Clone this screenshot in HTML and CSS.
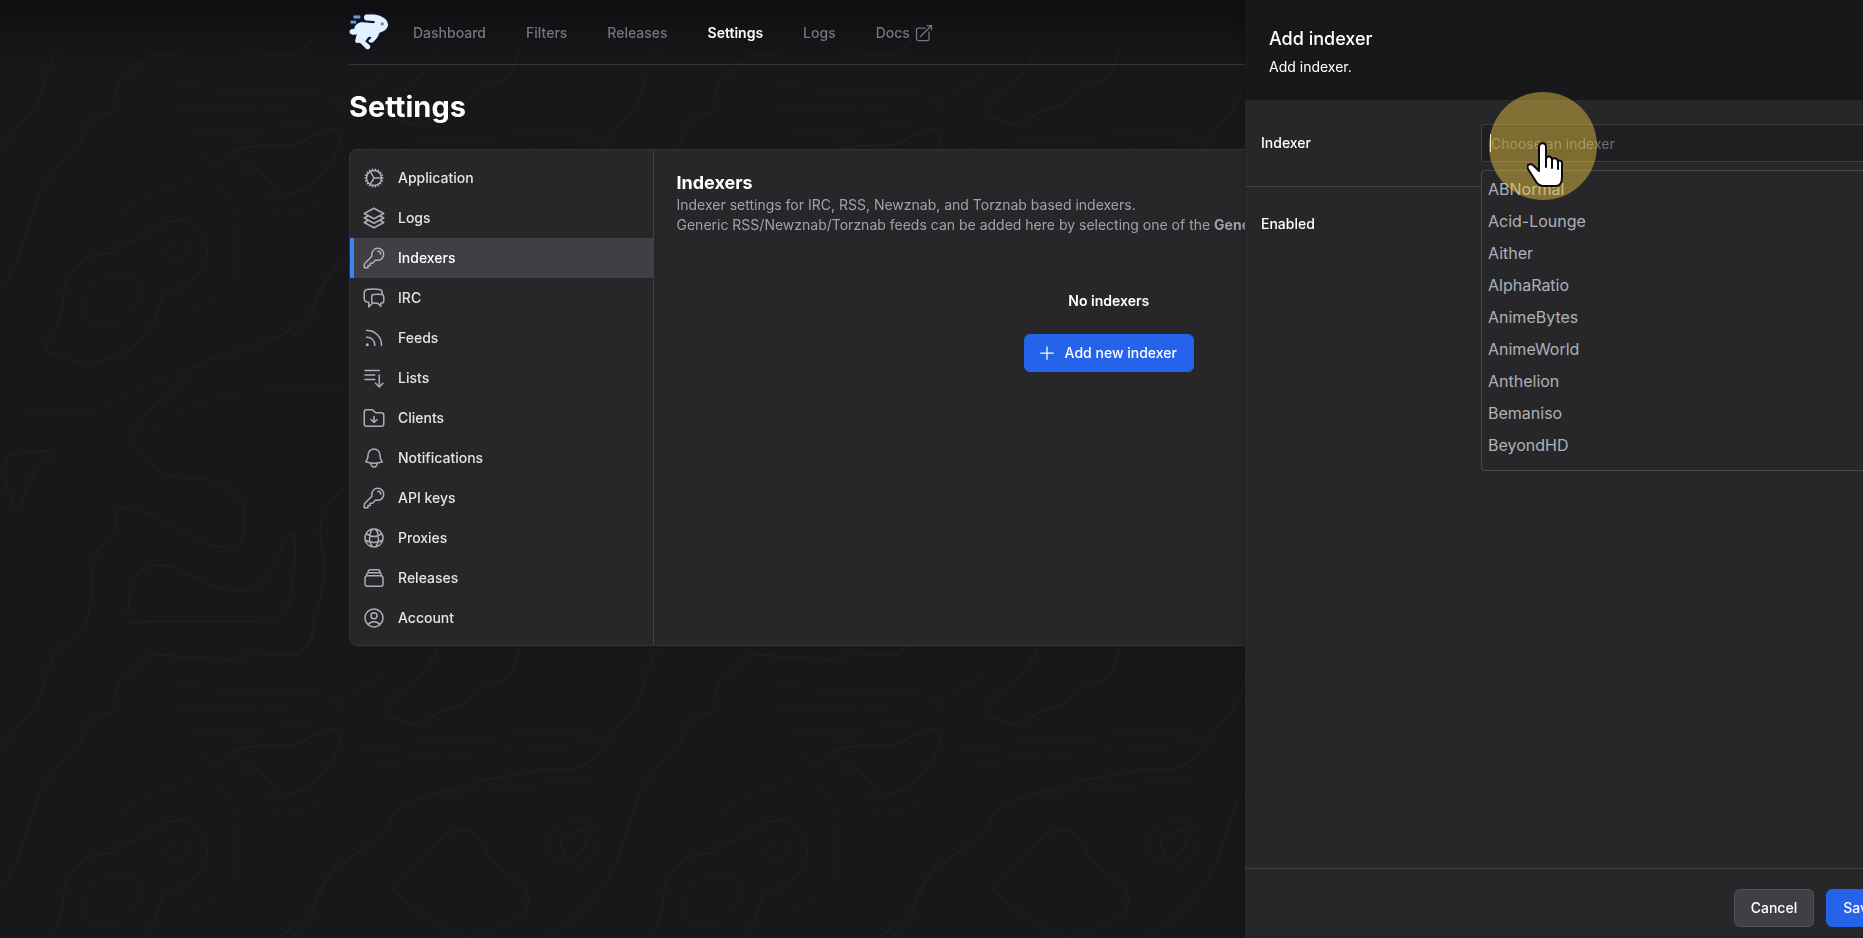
FILE: index.html
```html
<!DOCTYPE html>
<html lang="en">
<head>
	<meta charset="UTF-8">
	<meta name="viewport" content="width=device-width, initial-scale=1.0">
	<title>Settings - Indexers</title>
	<link rel="stylesheet" href="styles.css">
</head>
<body>

	<!-- contour line backdrop -->
	<svg class="backdrop" aria-hidden="true">
		<defs>
			<pattern id="contours" width="600" height="600" viewBox="0 0 1800 1800" patternUnits="userSpaceOnUse">
				<g id="lines" fill="none" stroke="#1e1e21" stroke-width="4">
					<path d="M0 455C30 420 30 400 95 335C140 290 120 190 190 140L240 93"/>
					<path d="M870 1010C920 990 940 960 950 900C970 830 1060 760 1140 715C1180 680 1140 660 1240 600C1300 570 1380 575 1410 560C1440 530 1500 540 1640 505C1720 520 1770 490 1800 455"/>
					<path d="M0 870C40 820 60 760 95 650C120 560 160 500 230 450C250 430 230 380 285 355C330 335 352 340 352 310C352 260 340 250 400 215C440 180 430 160 480 165C560 172 640 170 700 184C730 178 730 160 760 158C800 160 840 180 900 155C930 140 940 120 945 70"/>
					<path d="M1640 1010C1700 980 1770 920 1800 870"/>
					<path d="M685 462C740 430 820 440 890 434C950 400 1000 370 1020 400C1030 450 990 490 950 540C910 585 850 590 830 575C800 530 790 510 685 462Z"/>
					<path d="M145 1055C110 1040 190 990 190 900C190 830 240 755 335 760C360 740 340 730 400 725C440 710 470 660 550 660C600 680 630 740 620 770C610 830 550 860 490 890C460 960 440 1065 270 1090C200 1090 210 1065 145 1055Z"/>
					<path d="M1050 771C950 830 980 880 920 951C850 1020 760 1040 640 1076C540 1110 560 1150 500 1193C450 1220 400 1270 400 1318C410 1350 450 1400 500 1426C550 1440 600 1430 660 1446C700 1470 740 1520 735 1543C735 1590 730 1650 680 1641C620 1640 600 1620 560 1597C480 1560 420 1520 350 1525C345 1550 345 1575 345 1597C320 1620 280 1650 280 1704C275 1800 270 1860 240 1893"/>
					<path d="M385 1869C380 1750 400 1700 480 1695C560 1700 620 1775 740 1775C800 1770 830 1650 870 1600C900 1600 880 1720 870 1800C850 1860 830 1865 800 1862C660 1870 500 1855 385 1869Z"/>
					<path d="M1180 870C1200 820 1300 740 1330 710C1370 680 1420 680 1440 720C1470 770 1460 780 1540 830C1600 870 1600 930 1540 960C1440 1000 1430 1010 1400 1012C1360 1012 1250 940 1180 870Z"/>
					<path d="M1310 145C1290 200 1270 220 1240 245C1190 290 1150 300 1160 335C1180 355 1230 380 1260 375C1290 360 1300 340 1340 330C1420 310 1430 270 1460 255C1500 240 1520 250 1540 210C1560 150 1560 140 1570 100"/>
					<path d="M1680 720C1700 700 1760 680 1760 700C1760 740 1740 770 1710 780C1690 770 1680 730 1680 720Z"/>
					<path d="M20 1370C40 1350 120 1360 160 1350C180 1370 110 1390 100 1420C70 1500 60 1530 50 1525C20 1490 10 1430 20 1370Z"/>
					<path d="M1050 1455C990 1490 960 1530 960 1600C980 1700 970 1790 940 1870C940 1900 930 1930 900 1955"/>
				</g>
				<g id="faint" fill="none" stroke="#1b1b1e" stroke-width="3">
					<path d="M250 940C250 860 280 830 350 830C420 830 440 850 420 890C390 960 350 980 290 980C260 980 250 960 250 940Z"/>
					<path d="M490 745C495 725 540 710 570 730C580 760 560 780 530 785C500 775 490 760 490 745Z"/>
					<path d="M330 660C420 600 500 540 620 545C700 570 720 650 718 750C720 860 660 900 560 930"/>
					<path d="M500 255C560 240 600 260 640 275C750 280 900 260 960 270"/>
					<path d="M520 335C620 330 750 340 900 310C1000 330 1090 260 1120 230"/>
					<path d="M560 390C620 380 700 395 880 380C960 370 1050 320 1170 200"/>
					<path d="M560 410C600 400 680 410 770 415M570 430C590 490 640 480 740 510C800 560 820 620 840 650C900 650 940 600 1000 590"/>
					<path d="M1080 450C1250 420 1400 430 1560 400C1650 380 1750 400 1800 380"/>
					<path d="M1120 500C1300 450 1400 470 1560 450C1650 430 1750 440 1800 415"/>
					<path d="M1180 620C1300 580 1450 570 1560 560C1650 540 1750 560 1800 520"/>
					<path d="M1650 700C1700 660 1790 640 1800 690C1800 750 1760 810 1700 820C1660 800 1640 750 1650 700Z"/>
					<path d="M60 1250C150 1230 240 1260 330 1210C420 1160 500 1130 600 1090"/>
					<path d="M450 1300C560 1200 700 1170 850 1170C950 1160 1000 1190 1050 1150"/>
				</g>
				<use href="#lines" y="-1800"/>
			</pattern>
		</defs>
		<rect width="100%" height="100%" fill="url(#contours)"/>
	</svg>

	<div class="page">
		<header class="topbar">
			<div class="container">
				<nav class="nav">
					<a class="logo" href="#" aria-label="Home">
						<svg viewBox="26 39 124 116" width="40" height="40">
							<g stroke="#0b2447" stroke-width="5" stroke-linejoin="round" paint-order="stroke">
								<rect x="40" y="46" width="21" height="9" rx="2" fill="#7396c4"/>
								<rect x="31" y="62" width="17" height="9" rx="2" fill="#7396c4"/>
								<path fill="#e3f1ff" d="M80 43H104C128 46 146 58 147 74C146 88 135 96 120 99C117 111 110 118 102 127C97 132 90 130 86 125L96 114C93 110 87 111 83 116L76 126L91 139C95 146 87 153 80 150L62 132C54 130 46 133 45 125L50 104C43 106 32 107 28 99C26 90 34 86 42 88C45 74 54 67 68 67L102 70C107 69 108 64 104 63L80 61C70 60 70 44 80 43Z"/>
							</g>
							<circle cx="129" cy="72" r="5" fill="#5d83b5"/>
						</svg>
					</a>
					<div class="nav-links">
						<a href="#">Dashboard</a>
						<a href="#">Filters</a>
						<a href="#">Releases</a>
						<a href="#" class="current" aria-current="page">Settings</a>
						<a href="#">Logs</a>
						<a href="#">Docs
							<svg class="icon-sm" viewBox="0 0 24 24"><path d="M13.5 6H5.25A2.25 2.25 0 0 0 3 8.25v10.5A2.25 2.25 0 0 0 5.25 21h10.5A2.25 2.25 0 0 0 18 18.75V10.5m-10.5 6L21 3m0 0h-5.25M21 3v5.25"/></svg>
						</a>
					</div>
				</nav>
			</div>
		</header>

		<main class="container">
			<h1>Settings</h1>

			<div class="card">
				<aside class="sidebar">
					<a href="#">
						<svg class="icon" viewBox="0 0 24 24"><path d="M4.5 12a7.5 7.5 0 0 0 15 0m-15 0a7.5 7.5 0 1 1 15 0m-15 0H3m16.5 0H21m-1.5 0H12m-8.457 3.077 1.41-.513m14.095-5.13 1.41-.513M5.106 17.785l1.15-.964m11.49-9.642 1.149-.964M7.501 19.795l.75-1.3m7.5-12.99.75-1.3m-6.063 16.658.26-1.477m2.605-14.772.26-1.477m0 17.726-.26-1.477M10.698 4.614l-.26-1.477M16.5 19.794l-.75-1.299M7.5 4.205 12 12m6.894 5.785-1.149-.964M6.256 7.178l-1.15-.964m15.352 8.864-1.41-.513M4.954 9.435l-1.41-.514M12.002 12l-3.75 6.495"/></svg>
						Application
					</a>
					<a href="#">
						<svg class="icon" viewBox="0 0 24 24"><path d="M6.429 9.75 2.25 12l4.179 2.25m0-4.5 5.571 3 5.571-3m-11.142 0L2.25 7.5 12 2.25l9.75 5.25-4.179 2.25m0 0L21.75 12l-4.179 2.25m0 0 4.179 2.25L12 21.75 2.25 16.5l4.179-2.25m11.142 0-5.571 3-5.571-3"/></svg>
						Logs
					</a>
					<a href="#" class="active" aria-current="page">
						<svg class="icon" viewBox="0 0 24 24"><path d="M15.75 5.25a3 3 0 0 1 3 3m3 0a6 6 0 0 1-7.029 5.912c-.563-.097-1.159.026-1.563.43L10.5 17.25H8.25v2.25H6v2.25H2.25v-2.818c0-.597.237-1.17.659-1.591l6.499-6.499c.404-.404.527-1 .43-1.563A6 6 0 1 1 21.75 8.25Z"/></svg>
						Indexers
					</a>
					<a href="#">
						<svg class="icon" viewBox="0 0 24 24"><path d="M20.25 8.511c.884.284 1.5 1.128 1.5 2.097v4.286c0 1.136-.847 2.1-1.98 2.193-.34.027-.68.052-1.02.072v3.091l-3-3c-1.354 0-2.694-.055-4.02-.163a2.115 2.115 0 0 1-.825-.242m9.345-8.334a2.126 2.126 0 0 0-.476-.095 48.64 48.64 0 0 0-8.048 0c-1.131.094-1.976 1.057-1.976 2.192v4.286c0 .837.46 1.58 1.155 1.951m9.345-8.334V6.637c0-1.621-1.152-3.026-2.76-3.235A48.455 48.455 0 0 0 11.25 3c-2.115 0-4.198.137-6.24.402-1.608.209-2.76 1.614-2.76 3.235v6.226c0 1.621 1.152 3.026 2.76 3.235.577.075 1.157.14 1.74.194V21l4.155-4.155"/></svg>
						IRC
					</a>
					<a href="#">
						<svg class="icon" viewBox="0 0 24 24"><path d="M12.75 19.5v-.75a7.5 7.5 0 0 0-7.5-7.5H4.5m0-6.75h.75c7.87 0 14.25 6.38 14.25 14.25v.75M6 18.75a.75.75 0 1 1-1.5 0 .75.75 0 0 1 1.5 0Z"/></svg>
						Feeds
					</a>
					<a href="#">
						<svg class="icon" viewBox="0 0 24 24"><path d="M3 4.5h14.25M3 9h9.75M3 13.5h9.75m4.5-4.5v12m0 0-3.75-3.75M17.25 21 21 17.25"/></svg>
						Lists
					</a>
					<a href="#">
						<svg class="icon" viewBox="0 0 24 24"><path d="m9 13.5 3 3m0 0 3-3m-3 3v-6m1.06-4.19-2.12-2.12a1.5 1.5 0 0 0-1.061-.44H4.5A2.25 2.25 0 0 0 2.25 6v12a2.25 2.25 0 0 0 2.25 2.25h15A2.25 2.25 0 0 0 21.75 18V9a2.25 2.25 0 0 0-2.25-2.25h-5.379a1.5 1.5 0 0 1-1.06-.44Z"/></svg>
						Clients
					</a>
					<a href="#">
						<svg class="icon" viewBox="0 0 24 24"><path d="M14.857 17.082a23.848 23.848 0 0 0 5.454-1.31A8.967 8.967 0 0 1 18 9.75V9A6 6 0 0 0 6 9v.75a8.967 8.967 0 0 1-2.312 6.022c1.733.64 3.56 1.085 5.455 1.31m5.714 0a24.255 24.255 0 0 1-5.714 0m5.714 0a3 3 0 1 1-5.714 0"/></svg>
						Notifications
					</a>
					<a href="#">
						<svg class="icon" viewBox="0 0 24 24"><path d="M15.75 5.25a3 3 0 0 1 3 3m3 0a6 6 0 0 1-7.029 5.912c-.563-.097-1.159.026-1.563.43L10.5 17.25H8.25v2.25H6v2.25H2.25v-2.818c0-.597.237-1.17.659-1.591l6.499-6.499c.404-.404.527-1 .43-1.563A6 6 0 1 1 21.75 8.25Z"/></svg>
						API keys
					</a>
					<a href="#">
						<svg class="icon" viewBox="0 0 24 24"><path d="M12 21a9.004 9.004 0 0 0 8.716-6.747M12 21a9.004 9.004 0 0 1-8.716-6.747M12 21c2.485 0 4.5-4.03 4.5-9S14.485 3 12 3m0 18c-2.485 0-4.5-4.03-4.5-9S9.515 3 12 3m0 0a8.997 8.997 0 0 1 7.843 4.582M12 3a8.997 8.997 0 0 0-7.843 4.582m15.686 0A11.953 11.953 0 0 1 12 10.5c-2.998 0-5.74-1.1-7.843-2.918m15.686 0A8.959 8.959 0 0 1 21 12c0 .778-.099 1.533-.284 2.253m0 0A17.919 17.919 0 0 1 12 16.5c-3.162 0-6.133-.815-8.716-2.247m0 0A9.015 9.015 0 0 1 3 12c0-1.605.42-3.113 1.157-4.418"/></svg>
						Proxies
					</a>
					<a href="#">
						<svg class="icon" viewBox="0 0 24 24"><path d="M6 6.878V6a2.25 2.25 0 0 1 2.25-2.25h7.5A2.25 2.25 0 0 1 18 6v.878m-12 0c.235-.083.487-.128.75-.128h10.5c.263 0 .515.045.75.128m-12 0A2.25 2.25 0 0 0 4.5 9v.878m13.5-3A2.25 2.25 0 0 1 19.5 9v.878m0 0a2.246 2.246 0 0 0-.75-.128H5.25c-.263 0-.515.045-.75.128m15 0A2.25 2.25 0 0 1 21 12v6a2.25 2.25 0 0 1-2.25 2.25H5.25A2.25 2.25 0 0 1 3 18v-6c0-.98.626-1.813 1.5-2.122"/></svg>
						Releases
					</a>
					<a href="#">
						<svg class="icon" viewBox="0 0 24 24"><path d="M17.982 18.725A7.488 7.488 0 0 0 12 15.75a7.488 7.488 0 0 0-5.982 2.975m11.963 0a9 9 0 1 0-11.963 0m11.963 0A8.966 8.966 0 0 1 12 21a8.966 8.966 0 0 1-5.982-2.275M15 9.75a3 3 0 1 1-6 0 3 3 0 0 1 6 0Z"/></svg>
						Account
					</a>
				</aside>

				<section class="content">
					<h2>Indexers</h2>
					<p>Indexer settings for IRC, RSS, Newznab, and Torznab based indexers.<br>Generic RSS/Newznab/Torznab feeds can be added here by selecting one of the <b>Generic</b> indexers.</p>

					<div class="empty">
						<h3>No indexers</h3>
						<button type="button" class="btn btn-primary btn-icon">
							<svg class="icon-plus" viewBox="0 0 24 24"><path d="M12 4.5v15m7.5-7.5h-15"/></svg>
							Add new indexer
						</button>
					</div>
				</section>
			</div>
		</main>
	</div>

	<form class="drawer">
		<div class="drawer-head">
			<h2>Add indexer</h2>
			<p>Add indexer.</p>
		</div>

		<div class="drawer-body">
			<div class="field">
				<label for="indexer">Indexer</label>
				<div class="combo">
					<input id="indexer" type="text" placeholder="Choose an indexer" autocomplete="off">
					<span class="caret"></span>
					<ul class="menu">
						<li>ABNormal</li>
						<li>Acid-Lounge</li>
						<li>Aither</li>
						<li>AlphaRatio</li>
						<li>AnimeBytes</li>
						<li>AnimeWorld</li>
						<li>Anthelion</li>
						<li>Bemaniso</li>
						<li>BeyondHD</li>
					</ul>
					<div class="pointer">
						<svg viewBox="0 0 36 46" width="36" height="46">
							<path fill="#fff" stroke="#0a0a0a" stroke-width="2" stroke-linejoin="round" d="M12 29V5C12 0 19 0 19 5V17C20 13 25 14 25 18C26 15 31 16 31 20C32 17 36 19 35 23V35C35 40 33 44 29 44H16C12 44 10 42 8 38L1 27C-1 22 4 21 7 24Z"/>
							<path fill="none" stroke="#0a0a0a" stroke-width="2" stroke-linecap="round" d="M19 16V25M25 18V26M31 20V27"/>
						</svg>
					</div>
				</div>
			</div>
			<div class="field">
				<span class="field-name">Enabled</span>
			</div>
		</div>

		<div class="drawer-foot">
			<button type="button" class="btn">Cancel</button>
			<button type="submit" class="btn btn-primary">Save</button>
		</div>
	</form>

</body>
</html>
```

FILE: styles.css
```css
:root{
	font-family: Inter, "Liberation Sans", sans-serif;
	font-size: 14px;
	line-height: 20px;
	color: #fff;
	background-color: #18181b;
}

*{
	box-sizing: border-box;
}

body{
	margin: 0;
	height: 100vh;
	overflow: hidden;
}

h1, h2, h3, p, ul{
	margin: 0;
	padding: 0;
}

a{
	color: inherit;
	text-decoration: none;
}

.backdrop{
	position: fixed;
	inset: 0;
	width: 100%;
	height: 100%;
	z-index: -1;
}

/* page runs a little past the right edge, like the drawer */
.page{
	margin-right: -51px;
}

.container{
	max-width: 1216px;
	margin: 0 auto;
}

.topbar{
	background: linear-gradient(#0f0f12, #18181b00);
}

.nav{
	display: flex;
	align-items: center;
	height: 65px;
	border-bottom: 1px solid #36363a;
}

.logo svg{
	display: block;
}

.nav-links{
	display: flex;
	gap: 16px;
	margin-left: 12px;
	padding-top: 2px;
	font-weight: 500;
	color: #75757d;
}

.nav-links a{
	display: flex;
	align-items: center;
	gap: 4px;
	padding: 8px 12px;
}

.nav-links .current{
	color: #fff;
	font-weight: 600;
}

svg.icon, svg.icon-sm, svg.icon-plus{
	flex: none;
	fill: none;
	stroke: currentColor;
	stroke-width: 1.5;
	stroke-linecap: round;
	stroke-linejoin: round;
}

svg.icon{
	width: 24px;
	height: 24px;
	color: #adadb4;
}

svg.icon-sm{
	width: 20px;
	height: 20px;
}

svg.icon-plus{
	width: 20px;
	height: 20px;
}

h1{
	padding: 24px 0;
	font-size: 29px;
	line-height: 36px;
}

.card{
	display: grid;
	grid-template-columns: 1fr 3fr;
	background-color: #27272a;
	border: 1px solid #343438;
	border-radius: 8px;
	overflow: hidden;
}

.sidebar{
	padding: 8px 0 7px;
	border-right: 1px solid #3f3f46;
}

.sidebar a{
	display: flex;
	align-items: center;
	gap: 12px;
	height: 40px;
	padding: 0 12px 0 8px;
	border-left: 4px solid transparent;
	font-weight: 500;
	color: #e4e4e7;
}

.sidebar .active{
	background-color: #3f3f46;
	border-left-color: #3b82f6;
	color: #fff;
}

.content{
	padding: 23px;
}

h2{
	font-size: 18px;
	line-height: 20px;
}

.content p{
	margin-top: 2px;
	color: #a1a1aa;
}

.empty{
	display: flex;
	flex-direction: column;
	align-items: center;
	gap: 23px;
	padding-top: 56px;
}

h3{
	font-size: 14px;
	font-weight: 600;
}

.btn{
	display: flex;
	align-items: center;
	gap: 8px;
	height: 38px;
	padding: 0 16px;
	border: 1px solid #52525b;
	border-radius: 6px;
	background-color: #3f3f46;
	color: #fff;
	font: inherit;
	font-weight: 500;
}

.btn-primary{
	border-color: #2563eb;
	background-color: #2563eb;
}

.btn-icon{
	padding-left: 12px;
}

.drawer{
	position: fixed;
	top: 0;
	bottom: 0;
	right: -54px;
	width: 672px;
	display: flex;
	flex-direction: column;
	background-color: #27272a;
	box-shadow: 0 0 8px #00000040;
}

.drawer-head{
	padding: 25px 24px 0;
	height: 100px;
	background-color: #18181b;
}

.drawer-head h2{
	line-height: 28px;
	font-weight: 500;
}

.drawer-head p{
	margin-top: 4px;
}

.drawer-body{
	flex: 1;
}

.field{
	display: grid;
	grid-template-columns: 220px 1fr;
	align-items: center;
	padding: 24px 16px;
}

.field + .field{
	border-top: 1px solid #3f3f46;
	padding-top: 27px;
}

.field label, .field-name{
	font-weight: 500;
}

.combo{
	position: relative;
}

.combo input{
	display: block;
	width: 100%;
	height: 38px;
	padding: 0 9px;
	border: 1px solid #3f3f46;
	border-radius: 4px;
	background-color: #1f1f22;
	color: #fff;
	font: inherit;
}

.combo input::placeholder{
	color: #6f6f77;
}

.caret{
	position: absolute;
	left: 9px;
	top: 10px;
	width: 1px;
	height: 18px;
	background-color: #fff;
}

.menu{
	position: absolute;
	top: 46px;
	left: 0;
	right: 0;
	padding: 2px 0 9px;
	border: 1px solid #48484e;
	border-radius: 4px;
	background-color: #27272a;
	list-style: none;
	font-size: 16px;
	line-height: 32px;
	color: #b0b0b6;
}

.menu li{
	padding: 0 6px;
}

/* click highlight with the hand in it */
.pointer{
	position: absolute;
	left: 8px;
	top: -32px;
	width: 108px;
	height: 108px;
	padding: 50px 0 0 38px;
	border-radius: 50%;
	background-color: #f1c94273;
}

.drawer-foot{
	display: flex;
	justify-content: flex-end;
	gap: 12px;
	padding: 20px 24px 11px;
	border-top: 1px solid #3f3f46;
}
```
